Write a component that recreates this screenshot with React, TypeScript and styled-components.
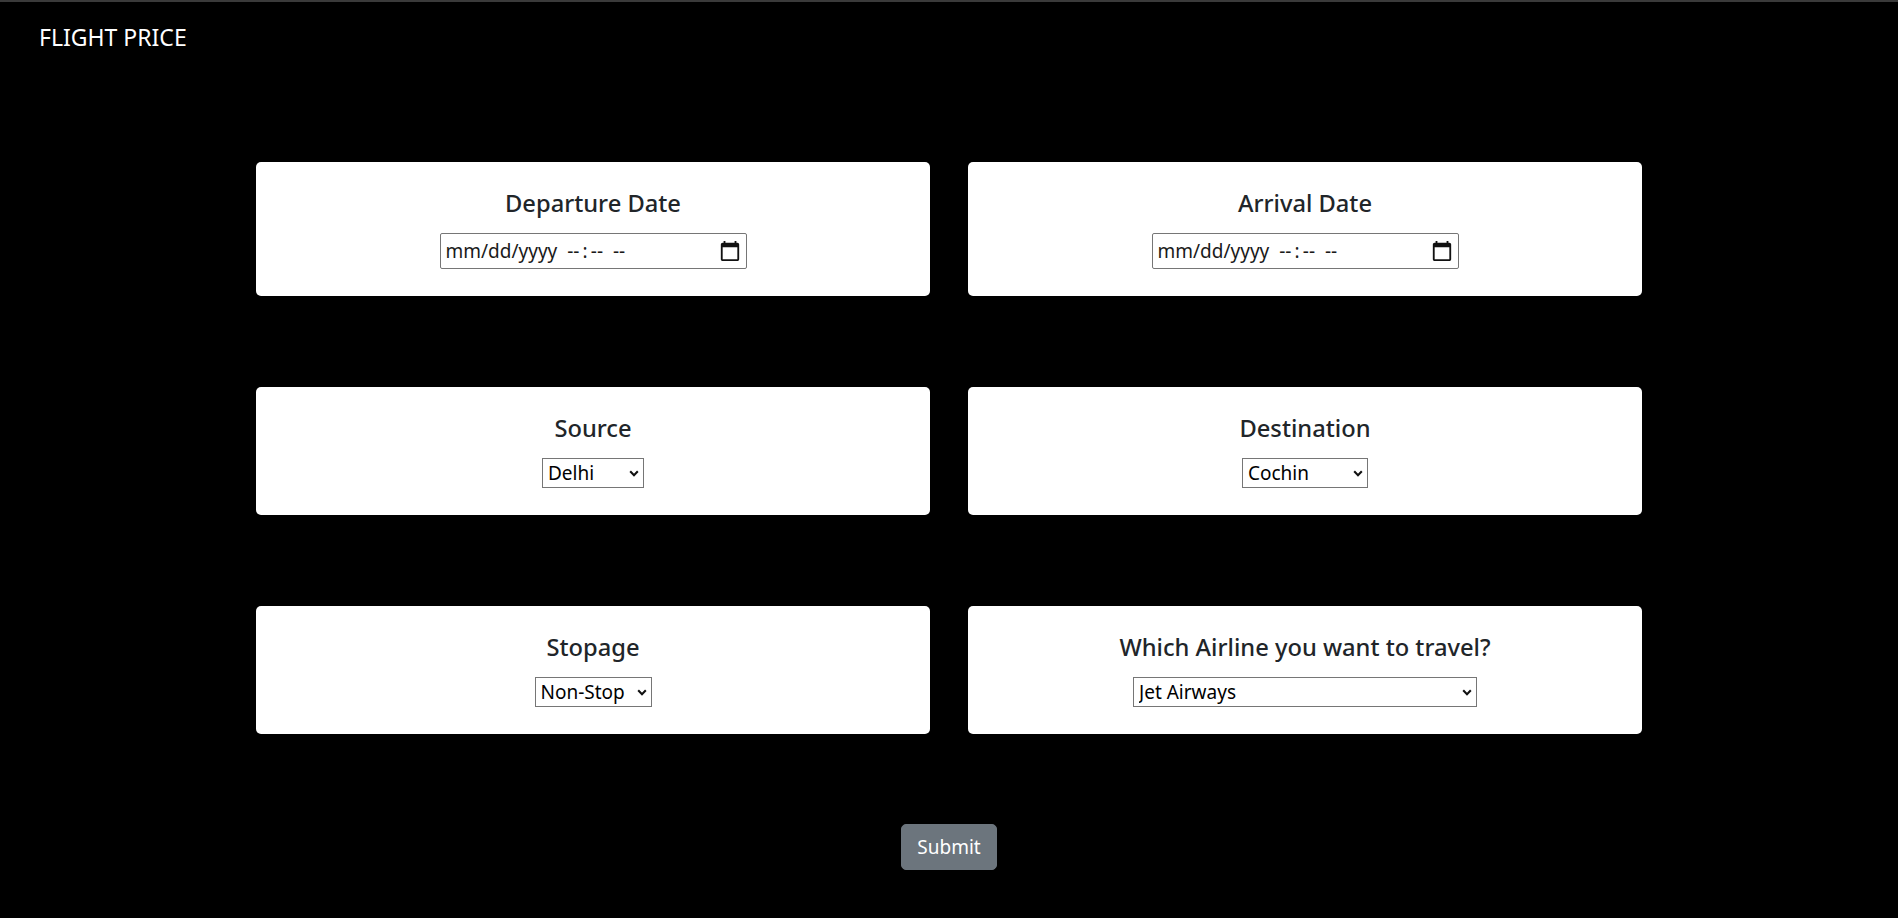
import React from "react";
import styled, { createGlobalStyle } from "styled-components";

const GlobalStyle = createGlobalStyle`
  html, body {
    margin: 0;
    padding: 0;
    background: #000;
  }
  body {
    font-family: "Noto Sans", "Open Sans", Arial, sans-serif;
    color: #212529;
  }
  * { box-sizing: border-box; }
`;

const Page = styled.div`
  min-height: 918px;
  background: #000;
  border-top: 2px solid #3a3a3a;
  display: flex;
  flex-direction: column;
`;

const NavBar = styled.nav`
  display: flex;
  align-items: center;
  padding: 17px 39px 0;
`;

const Brand = styled.span`
  font-family: "Noto Sans", sans-serif;
  font-size: 23px;
  line-height: 37px;
  color: #fff;
`;

const Form = styled.form`
  display: flex;
  flex-direction: column;
  align-items: center;
  padding-top: 106px;
`;

const Grid = styled.div`
  display: grid;
  grid-template-columns: 674px 674px;
  column-gap: 38px;
  row-gap: 91px;
  align-items: start;
`;

const Card = styled.div`
  background: #fff;
  border-radius: 5px;
  padding: 26px 20px 27px;
  display: flex;
  flex-direction: column;
  align-items: center;
`;

const CardTitle = styled.h5`
  margin: 0 0 15px;
  font-family: "Noto Sans", sans-serif;
  font-size: 23.7px;
  font-weight: 500;
  line-height: 30px;
  color: #212529;
`;

const Field = styled.label<{ $w: number; $h: number }>`
  position: relative;
  display: block;
  width: ${(p) => p.$w}px;
  height: ${(p) => p.$h}px;
`;

const DateInput = styled.input`
  width: 100%;
  height: 100%;
  font-family: "Noto Sans", sans-serif;
  font-size: 19px;
  color: #000;
  border: 1px solid #767676;
  border-radius: 2px;
  padding: 0 36px 0 5px;
  background: #fff;
  outline: none;
  &::placeholder {
    color: #1a1a1a;
    opacity: 1;
  }
`;

const CalendarIcon = styled.svg`
  position: absolute;
  right: 6px;
  top: 7px;
  width: 22px;
  height: 22px;
  pointer-events: none;
`;

const Select = styled.select`
  appearance: none;
  -webkit-appearance: none;
  width: 100%;
  height: 100%;
  font-family: "Noto Sans", sans-serif;
  font-size: 19px;
  color: #000;
  border: 1px solid #767676;
  border-radius: 0;
  background: #fff;
  padding: 0 24px 0 5px;
  outline: none;
`;

const Chevron = styled.svg`
  position: absolute;
  right: 5px;
  top: 12px;
  width: 10px;
  height: 7px;
  pointer-events: none;
`;

const SubmitButton = styled.button`
  margin-top: 90px;
  width: 96px;
  height: 46px;
  background: #6c757d;
  border: 1px solid #6c757d;
  border-radius: 5px;
  color: #fff;
  font-family: "Noto Sans", sans-serif;
  font-size: 19px;
  line-height: 30px;
  cursor: pointer;
`;

const sources = ["Delhi", "Kolkata", "Mumbai", "Chennai", "Banglore"];
const destinations = ["Cochin", "Banglore", "Delhi", "New Delhi", "Hyderabad", "Kolkata"];
const stops = ["Non-Stop", "1", "2", "3", "4"];
const airlines = [
  "Jet Airways",
  "IndiGo",
  "Air India",
  "Multiple carriers",
  "SpiceJet",
  "Vistara",
  "Air Asia",
  "GoAir",
  "Multiple carriers Premium economy",
  "Jet Airways Business",
  "Vistara Premium economy",
  "Trujet",
];

function DateTime({ name }: { name: string }) {
  return (
    <Field $w={307} $h={36}>
      <DateInput
        type="text"
        name={name}
        placeholder={"mm/dd/yyyy\u00a0 --\u2009:\u2009--\u00a0 --"}
      />
      <CalendarIcon viewBox="0 0 24 24" aria-hidden="true">
        <path
          fill="#111"
          d="M20 3h-1V1h-2v2H7V1H5v2H4c-1.1 0-2 .9-2 2v16c0 1.1.9 2 2 2h16c1.1 0 2-.9 2-2V5c0-1.1-.9-2-2-2zm0 18H4V8h16v13z"
        />
      </CalendarIcon>
    </Field>
  );
}

function Dropdown({ name, width, options }: { name: string; width: number; options: string[] }) {
  return (
    <Field $w={width} $h={30}>
      <Select name={name}>
        {options.map((o) => (
          <option key={o}>{o}</option>
        ))}
      </Select>
      <Chevron viewBox="0 0 10 7" aria-hidden="true">
        <path d="M1.2 1.3 L5 5.2 L8.8 1.3" fill="none" stroke="#111" strokeWidth="2.1" />
      </Chevron>
    </Field>
  );
}

export default function App() {
  return (
    <>
      <GlobalStyle />
      <Page>
        <NavBar>
          <Brand>FLIGHT PRICE</Brand>
        </NavBar>
        <Form onSubmit={(e) => e.preventDefault()}>
          <Grid>
            <Card>
              <CardTitle>Departure Date</CardTitle>
              <DateTime name="Dep_Time" />
            </Card>
            <Card>
              <CardTitle>Arrival Date</CardTitle>
              <DateTime name="Arrival_Time" />
            </Card>
            <Card>
              <CardTitle>Source</CardTitle>
              <Dropdown name="Source" width={102} options={sources} />
            </Card>
            <Card>
              <CardTitle>Destination</CardTitle>
              <Dropdown name="Destination" width={126} options={destinations} />
            </Card>
            <Card>
              <CardTitle>Stopage</CardTitle>
              <Dropdown name="stops" width={117} options={stops} />
            </Card>
            <Card>
              <CardTitle>Which Airline you want to travel?</CardTitle>
              <Dropdown name="airline" width={344} options={airlines} />
            </Card>
          </Grid>
          <SubmitButton type="submit">Submit</SubmitButton>
        </Form>
      </Page>
    </>
  );
}
